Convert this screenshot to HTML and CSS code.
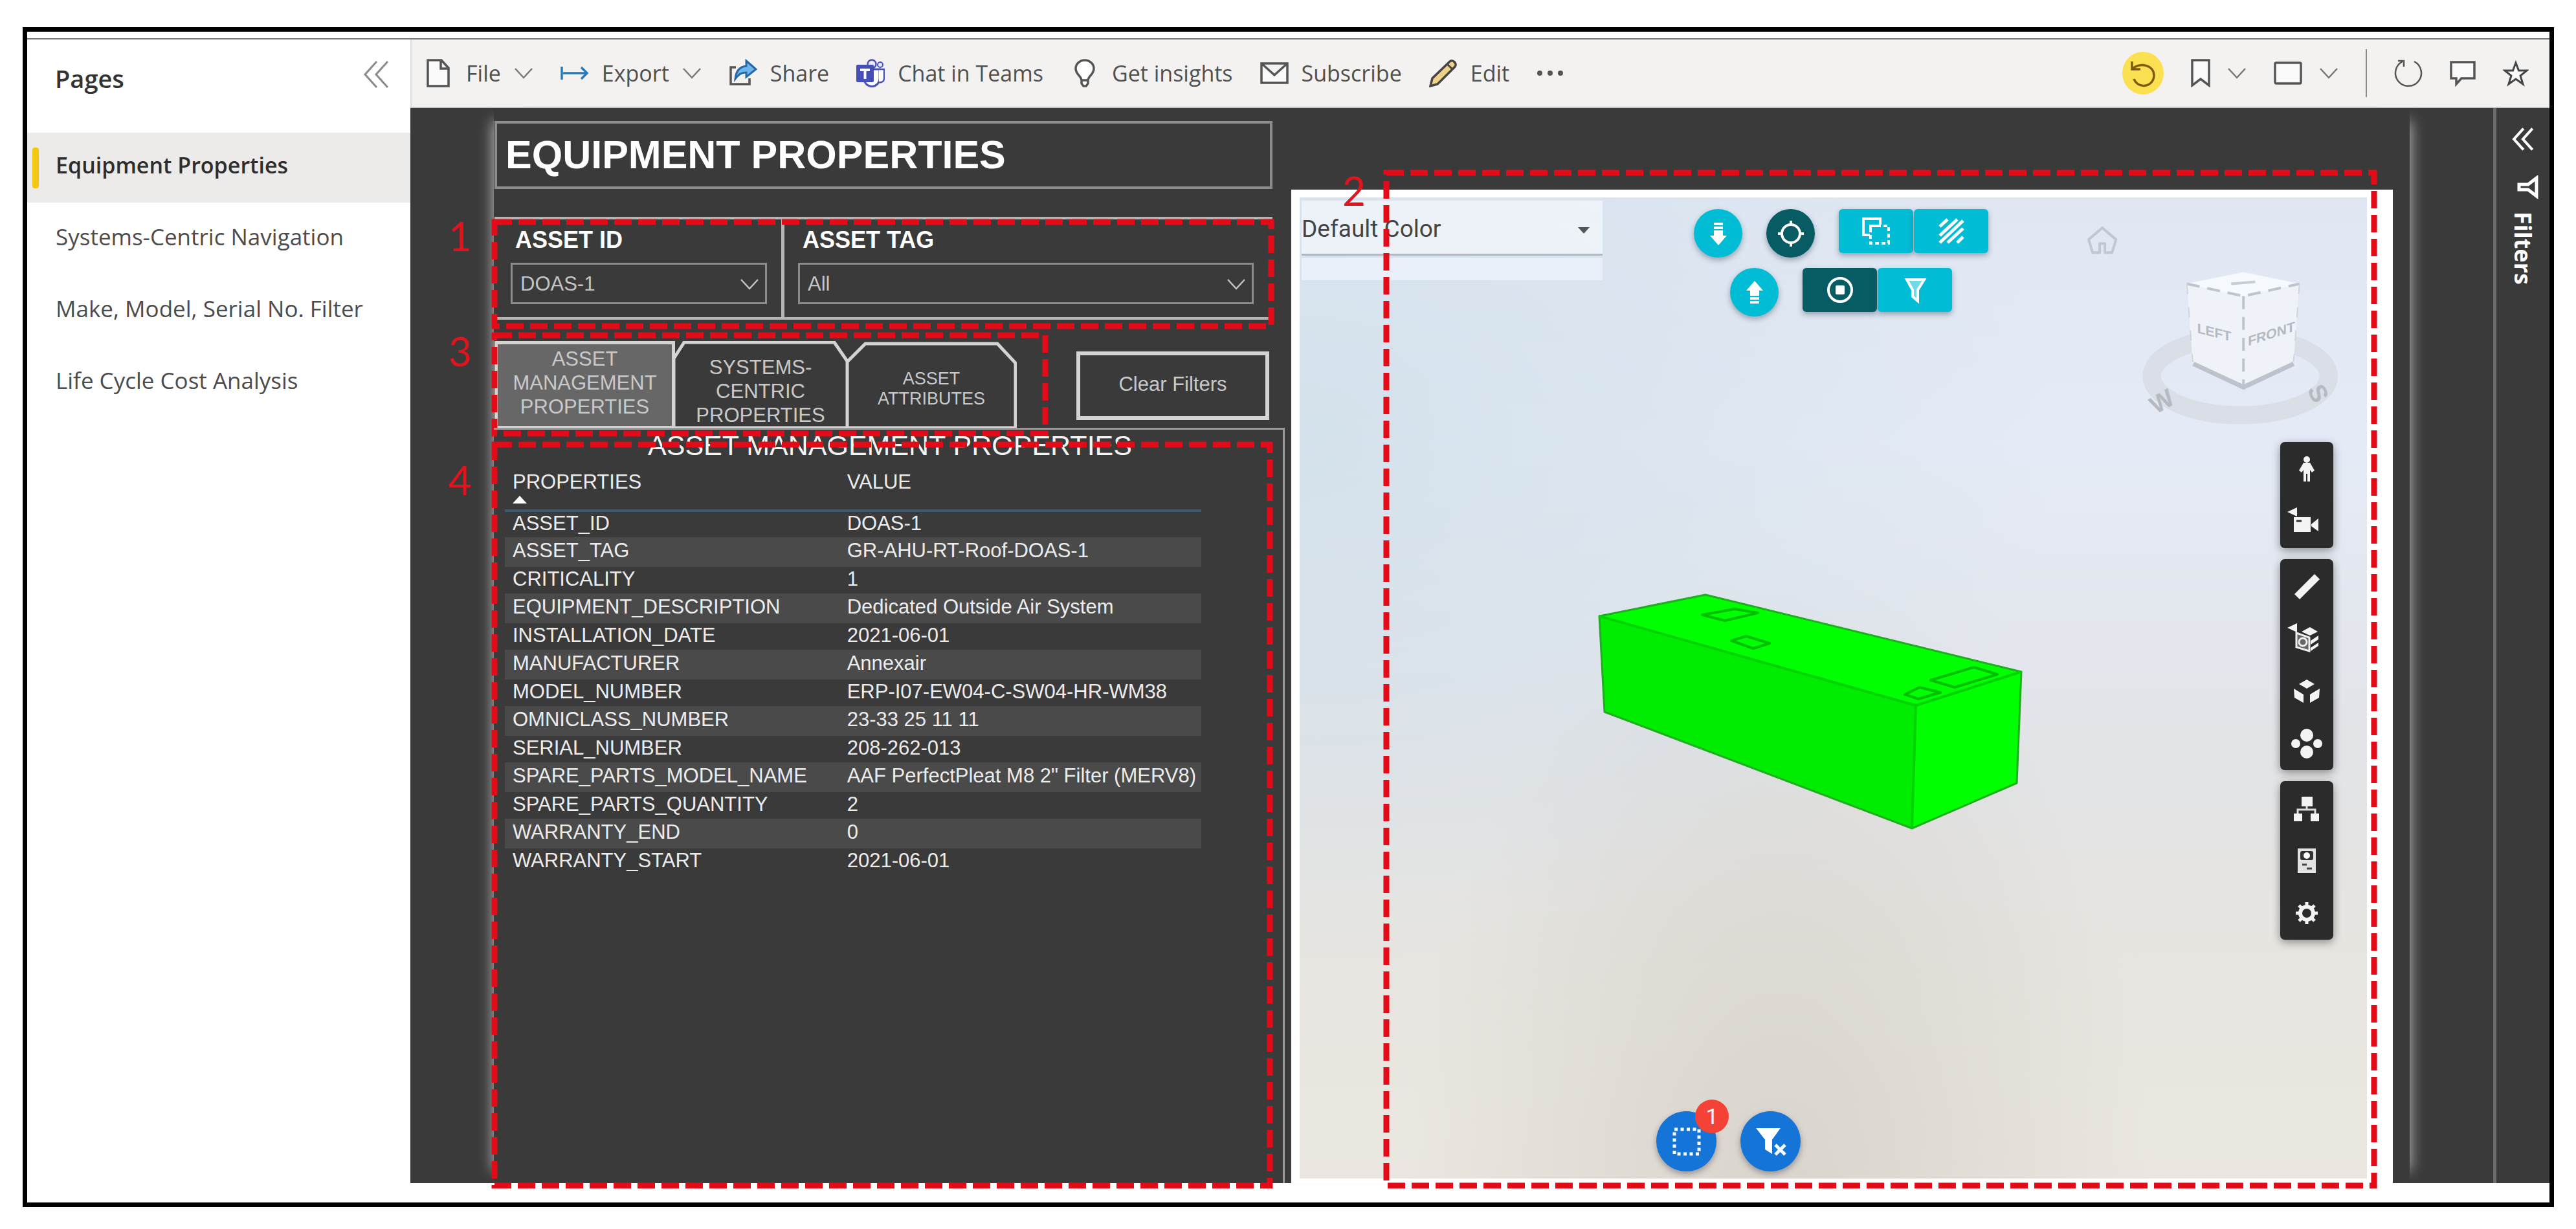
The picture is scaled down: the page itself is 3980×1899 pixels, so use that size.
FILE: index.html
```html
<!DOCTYPE html>
<html lang="en">
<head>
<meta charset="utf-8">
<title>Equipment Properties</title>
<link rel="stylesheet" href="styles.css">
</head>
<body>
<svg width="0" height="0" class="defs" aria-hidden="true">
  <symbol id="chevron" viewBox="0 0 30 20"><path d="M2 3 15 17 28 3" fill="none" stroke="currentColor" stroke-width="2.5"/></symbol>
  <symbol id="collapse" viewBox="0 0 40 44"><path d="M21 2 3 22 21 42M38 2 20 22 38 42" fill="none" stroke="currentColor"/></symbol>
</svg>
<div class="frame">
  <div class="app">
    <nav class="pages" aria-label="Pages">
      <header class="pages-head">
        <h2>Pages</h2>
        <button class="plain" aria-label="Collapse pages"><svg width="42" height="44" stroke-width="3"><use href="#collapse"/></svg></button>
      </header>
      <a class="page active" href="#equipment">Equipment Properties</a>
      <a class="page" href="#systems">Systems-Centric Navigation</a>
      <a class="page" href="#make">Make, Model, Serial No. Filter</a>
      <a class="page" href="#cost">Life Cycle Cost Analysis</a>
    </nav>
    <div class="main">
      <div class="toolbar">
        <button class="tool"><svg width="44" height="44" viewBox="0 0 44 44"><path d="M5 2h21l11 12v28H5zM25 2v13h12" fill="#fafafa" stroke="#555" stroke-width="3.500"/></svg>File<svg class="chev" width="30" height="20"><use href="#chevron"/></svg></button>
        <button class="tool"><svg width="44" height="44" viewBox="0 0 44 44"><path d="M2 12v20M4 22h37M32 13l9 9-9 9" fill="none" stroke="#2b7ab8" stroke-width="3.500"/></svg>Export<svg class="chev" width="30" height="20"><use href="#chevron"/></svg></button>
        <button class="tool"><svg width="44" height="44" viewBox="0 0 44 44"><path d="M11 13H3v26h29v-9" fill="none" stroke="#555" stroke-width="3.500"/><path d="M27 3 42 16 27 28v-7c-8 0-12 3-17 10 1-12 7-19 17-20z" fill="#6cb4ee" stroke="#2468a6" stroke-width="3"/></svg>Share</button>
        <button class="tool"><svg width="44" height="44" viewBox="0 0 44 44"><circle cx="24" cy="8" r="6.500" fill="#e9e9fb" stroke="#4b53bc" stroke-width="2.500"/><circle cx="37" cy="9" r="4" fill="#e9e9fb" stroke="#4b53bc" stroke-width="2"/><path d="M12 16h24v14a12 12 0 0 1-24 1z" fill="#fff" stroke="#4b53bc" stroke-width="3"/><path d="M35 16h8v14c0 5-4 7-8 6" fill="#fff" stroke="#4b53bc" stroke-width="2.500"/><rect y="9" width="27" height="27" rx="2" fill="#464eb8"/><path d="M6 17h15M13.500 17v14" stroke="#fff" stroke-width="4"/></svg>Chat in Teams</button>
        <button class="tool"><svg width="44" height="44" viewBox="0 0 44 44"><path d="M17 33c0-6-9-9-9-18a14 13 0 0 1 28 0c0 9-9 12-9 18zM17 33v5l3 4h4l3-4v-5" fill="#fff" stroke="#555" stroke-width="3.500"/></svg>Get insights</button>
        <button class="tool"><svg width="44" height="44" viewBox="0 0 44 44"><path d="M2 7h40v30H2zM2 7l20 18L42 7" fill="#fafafa" stroke="#555" stroke-width="3.500"/></svg>Subscribe</button>
        <button class="tool"><svg width="44" height="44" viewBox="0 0 44 44"><path d="M2 42 5 30 32 4c4-4 12 3 8 8L13 39z" fill="#f0d188" stroke="#444" stroke-width="3.500"/><path d="M28 8l8 8" stroke="#444" stroke-width="3"/></svg>Edit</button>
        <button class="plain" aria-label="More"><svg width="44" height="12"><g fill="#555"><circle cx="5" cy="6" r="4"/><circle cx="21" cy="6" r="4"/><circle cx="37" cy="6" r="4"/></g></svg></button>
        <div class="tools-end">
          <button class="plain reset" aria-label="Reset"><svg width="42" height="44" viewBox="0 0 42 44"><path d="M4 4v12h13M5 15C16 5 38 9 38 26a16 16 0 0 1-31 5" fill="none" stroke="#7d5c10" stroke-width="3.500"/></svg></button>
          <button class="plain pair" aria-label="Bookmarks"><svg width="30" height="44"><path d="M2 2h26v39L15 31 2 41z" fill="#fafafa" stroke="#555" stroke-width="3.500"/></svg><svg class="chev" width="30" height="20"><use href="#chevron"/></svg></button>
          <button class="plain pair" aria-label="View"><svg width="44" height="44"><rect x="2" y="6" width="40" height="32" rx="2" fill="#fafafa" stroke="#555" stroke-width="3.500"/></svg><svg class="chev" width="30" height="20"><use href="#chevron"/></svg></button>
          <span class="rule"></span>
          <button class="plain" aria-label="Refresh"><svg width="44" height="44"><path d="M31 4a20 20 0 1 1-18 0M6 3h9v9" fill="none" stroke="#555" stroke-width="2.500"/></svg></button>
          <button class="plain" aria-label="Comment"><svg width="40" height="44"><path d="M2 5h36v25H18l-8 9v-9H2z" fill="#fafafa" stroke="#555" stroke-width="3.500"/></svg></button>
          <button class="plain" aria-label="Favorite"><svg width="40" height="44"><path d="M20 6l4.500 12H37L27 26l4 13-11-8-11 8 4-13L3 18h12.500z" fill="#fafafa" stroke="#444" stroke-width="3"/></svg></button>
        </div>
      </div>

      <div class="report">
        <main class="canvas">
          <section class="details">
            <h1>EQUIPMENT PROPERTIES</h1>
            <div class="slicers">
              <div class="slicer">
                <label for="asset-id">ASSET ID</label>
                <div class="pick"><select id="asset-id"><option>DOAS-1</option></select><svg width="30" height="20"><use href="#chevron"/></svg></div>
              </div>
              <div class="slicer wide">
                <label for="asset-tag">ASSET TAG</label>
                <div class="pick"><select id="asset-tag"><option>All</option></select><svg width="30" height="20"><use href="#chevron"/></svg></div>
              </div>
              <div class="callout one"><svg><rect width="100%" height="100%"/></svg><b>1</b></div>
            </div>
            <div class="tabs">
              <button class="tab selected">ASSET MANAGEMENT PROPERTIES</button>
              <button class="tab cut low"><svg viewBox="0 0 272 136" preserveAspectRatio="none"><path d="M2 134V27L18 2h232l20 29v103z"/></svg><span>SYSTEMS-<br>CENTRIC<br>PROPERTIES</span></button>
              <button class="tab cut small"><svg viewBox="0 0 264 136" preserveAspectRatio="none"><path d="M2 134V32L30 4h204l28 30v100z"/></svg><span>ASSET<br>ATTRIBUTES</span></button>
              <button class="clear">Clear Filters</button>
              <div class="callout three"><svg><rect width="100%" height="100%"/></svg><b>3</b></div>
            </div>
            <div class="panel">
              <h3>ASSET MANAGEMENT PROPERTIES</h3>
              <table>
                <thead><tr><th scope="col">PROPERTIES<svg class="sort" width="22" height="12"><path d="M0 12 11 0 22 12z" fill="#fff"/></svg></th><th scope="col">VALUE</th></tr></thead>
                <tbody>
                  <tr><td>ASSET_ID</td><td>DOAS-1</td></tr>
                  <tr><td>ASSET_TAG</td><td>GR-AHU-RT-Roof-DOAS-1</td></tr>
                  <tr><td>CRITICALITY</td><td>1</td></tr>
                  <tr><td>EQUIPMENT_DESCRIPTION</td><td>Dedicated Outside Air System</td></tr>
                  <tr><td>INSTALLATION_DATE</td><td>2021-06-01</td></tr>
                  <tr><td>MANUFACTURER</td><td>Annexair</td></tr>
                  <tr><td>MODEL_NUMBER</td><td>ERP-I07-EW04-C-SW04-HR-WM38</td></tr>
                  <tr><td>OMNICLASS_NUMBER</td><td>23-33 25 11 11</td></tr>
                  <tr><td>SERIAL_NUMBER</td><td>208-262-013</td></tr>
                  <tr><td>SPARE_PARTS_MODEL_NAME</td><td>AAF PerfectPleat M8 2" Filter (MERV8)</td></tr>
                  <tr><td>SPARE_PARTS_QUANTITY</td><td>2</td></tr>
                  <tr><td>WARRANTY_END</td><td>0</td></tr>
                  <tr><td>WARRANTY_START</td><td>2021-06-01</td></tr>
                </tbody>
              </table>
              <div class="callout four"><svg><rect width="100%" height="100%"/></svg><b>4</b></div>
            </div>
          </section>

          <section class="viewer" aria-label="Model viewer">
            <div class="scene">
              <svg class="model" viewBox="2008 305 1649 1516" role="img" aria-label="Selected equipment">
                <g stroke-linejoin="round">
                  <path d="M2471 952 2960 1090 2954 1280 2479 1100z" fill="#00ec00"/>
                  <path d="M2960 1090 3123 1038 3116 1210 2954 1280z" fill="#00ff00"/>
                  <path d="M2471 952 2635 919 3123 1038 2960 1090z" fill="#00ff00"/>
                  <path d="M2471 952 2635 919 3123 1038 3116 1210 2954 1280 2479 1100z" fill="none" stroke="#1fae1f" stroke-width="3"/>
                  <path d="M2471 952 2960 1090 3123 1038M2960 1090 2954 1280" fill="none" stroke="#00d400" stroke-width="4"/>
                  <path d="M2630 950 2680 941 2716 947 2665 959zM2675 990 2698 983 2734 994 2709 1002zM2983 1051 3050 1031 3086 1042 3020 1062zM2943 1073 2966 1062 2998 1070 2964 1080z" fill="none" stroke="#00c000" stroke-width="4"/>
                </g>
              </svg>

              <div class="theme">
                <select aria-label="Color theme"><option>Default Color</option></select>
                <svg width="18" height="12"><path d="M0 1h18L9 11z" fill="#555"/></svg>
              </div>

              <div class="actions">
                <div class="row">
                  <button class="round" aria-label="Move down"><svg width="44" height="44"><path d="M15 5h14v4H15zM15 11h14v4H15zM15 17h14v8h6L22 40 9 25h6z" fill="#fff"/></svg></button>
                  <button class="round dark" aria-label="Focus"><svg width="44" height="44"><g fill="none" stroke="#fff" stroke-width="4"><circle cx="22" cy="22" r="14"/><path d="M22 2v7M22 35v7M2 22h7M35 22h7"/></g></svg></button>
                  <div class="group">
                    <button aria-label="Isolate"><svg width="48" height="44"><g fill="none" stroke="#fff" stroke-width="4"><path d="M14 28H4V3h26v9"/><rect x="15" y="14" width="28" height="27" stroke-dasharray="6 4"/><path d="M15 24V14h12"/></g></svg></button>
                    <button aria-label="Hatch"><svg width="44" height="44"><path d="M4 15 16 4M4 29 31 4M4 40 40 6M16 40 40 18M31 40 40 31" stroke="#fff" stroke-width="5"/></svg></button>
                  </div>
                </div>
                <div class="row">
                  <button class="round" aria-label="Move up"><svg width="44" height="44"><path d="M15 39h14v-4H15zM15 33h14v-4H15zM15 27h14v-8h6L22 4 9 19h6z" fill="#fff"/></svg></button>
                  <div class="group">
                    <button class="dark" aria-label="Selection"><svg width="44" height="44"><circle cx="22" cy="22" r="18" fill="none" stroke="#fff" stroke-width="4"/><rect x="15" y="15" width="14" height="14" rx="2" fill="#fff"/></svg></button>
                    <button aria-label="Filter"><svg width="44" height="44"><path d="M9 6h27L26 22v17l-8-7V22z" fill="#6fdbe8" stroke="#fff" stroke-width="4"/></svg></button>
                  </div>
                </div>
              </div>

              <svg class="cube" width="320" height="320" viewBox="3220 345 390 320" preserveAspectRatio="xMinYMin slice" role="img" aria-label="View cube">
                <path d="M3227 370 3248 352 3269 370 3263 390h-11v-14h-8v14h-11z" fill="none" stroke="#c2c8cf" stroke-width="4" stroke-linejoin="round"/>
                <ellipse cx="3460" cy="580" rx="136" ry="60" fill="none" stroke="#dadee6" stroke-width="28"/>
                <path d="M3378 438 3465 420 3551 438 3542 558 3465 593 3387 558z" fill="#eff3f9"/>
                <path d="M3378 438 3465 420 3551 438 3465 457z" fill="#f6f9fd"/>
                <path d="M3378 438 3465 457 3551 438M3465 457V593" fill="none" stroke="#c0c5cd" stroke-width="4" stroke-dasharray="20 12"/>
                <path d="M3378 438 3387 558M3551 438 3542 558" stroke="#d0d5dd" stroke-width="2" stroke-dasharray="16 20"/>
                <path d="M3388 561 3465 597 3542 561" fill="none" stroke="#bcc3cd" stroke-width="7"/>
                <path d="M3446 438l37-3" stroke="#c8cdd5" stroke-width="4"/>
                <g fill="#b4b9c2" font-family="Liberation Sans, sans-serif" font-weight="700" text-anchor="middle">
                  <text transform="translate(3420 520) skewY(14)" font-size="21">LEFT</text>
                  <text transform="translate(3508 522) skewY(-18)" font-size="21">FRONT</text>
                  <text transform="translate(3346 630) rotate(-30)" font-size="38">W</text>
                  <text transform="translate(3568 612) rotate(65)" font-size="38">S</text>
                </g>
              </svg>

              <div class="rails">
                <div class="rail">
                  <button aria-label="First person"><svg width="44" height="44" viewBox="0 0 44 44"><circle cx="22" cy="7" r="5" fill="#f4f4f4"/><path d="M17 12h10l7 12-4 3-3-4v18h-4V29h-2v12h-4V23l-3 4-4-3z" fill="#f4f4f4"/></svg></button>
                  <button aria-label="Camera"><svg width="60" height="44" viewBox="0 0 60 44"><path d="M0 7 15 0v14zM10 15h26v23H10zM37 26l11-9v20l-11-8z" fill="#f4f4f4"/><path d="M14 21h8" stroke="#333" stroke-width="3"/></svg></button>
                </div>
                <div class="rail">
                  <button aria-label="Measure"><svg width="44" height="44" viewBox="0 0 44 44"><path d="M3 34 34 3l8 8L11 42z" fill="#f4f4f4"/></svg></button>
                  <button aria-label="Section"><svg width="60" height="48" viewBox="0 0 60 48"><path d="M0 7 15 0v14zM22 13l13-7 12 7-12 6zM36 27l12-8v6l-12 8zM36 38l12-8v5l-12 8z" fill="#f4f4f4"/><path d="M14 15l20 7v21l-20-6z" fill="#666" stroke="#eee" stroke-width="3"/><circle cx="24" cy="29" r="6" fill="none" stroke="#eee" stroke-width="3"/></svg></button>
                  <button aria-label="Explode"><svg width="44" height="44" viewBox="0 0 44 44"><path d="M10 11 22 4l12 7-12 7zM2 18l15 9v13L3 32zM42 18l-15 9v13l14-8z" fill="#f4f4f4"/></svg></button>
                  <button aria-label="Groups"><svg width="48" height="48" viewBox="0 0 48 48"><g fill="#f4f4f4"><circle cx="24" cy="11" r="10"/><circle cx="24" cy="37" r="10"/><circle cx="7" cy="24" r="7"/><circle cx="41" cy="24" r="7"/></g></svg></button>
                </div>
                <div class="rail">
                  <button aria-label="Model tree"><svg width="44" height="44" viewBox="0 0 44 44"><path d="M14 4h17v15H14zM2 30h13v12H2zM28 30h13v12H28z" fill="#f4f4f4"/><path d="M8 30v-6h27v6M22 18v6" fill="none" stroke="#ddd" stroke-width="3"/></svg></button>
                  <button aria-label="Properties"><svg width="44" height="44" viewBox="0 0 44 44"><rect x="8" y="3" width="28" height="38" fill="#e2e2e2"/><rect x="12" y="7" width="20" height="14" rx="3" fill="#333"/><circle cx="22" cy="14" r="5" fill="#fff"/><path d="M15 28h7M22 34h8" stroke="#444" stroke-width="3"/></svg></button>
                  <button aria-label="Settings"><svg width="44" height="44" viewBox="0 0 44 44"><circle cx="22" cy="22" r="10" fill="none" stroke="#f4f4f4" stroke-width="6"/><path d="M22 5v6M22 33v6M5 22h6M33 22h6M10 10l5 5M34 10l-5 5M10 34l5-5M34 34l-5-5" stroke="#f4f4f4" stroke-width="5"/></svg></button>
                </div>
              </div>

              <div class="selection">
                <button aria-label="Selected items"><svg width="44" height="44"><rect x="3" y="3" width="38" height="38" fill="none" stroke="#fff" stroke-width="5" stroke-dasharray="5 4.500"/></svg><span class="badge">1</span></button>
                <button aria-label="Remove filter"><svg width="52" height="48"><path d="M3 3h38L28 21v22l-11-7V21z" fill="#fff"/><path d="M33 29l15 15M48 29 33 44" stroke="#fff" stroke-width="5"/></svg></button>
              </div>
            </div>
            <div class="callout two"><svg><rect width="100%" height="100%"/></svg><b>2</b></div>
          </section>
        </main>
        <aside class="filters">
          <button class="plain" aria-label="Expand filters"><svg width="36" height="36" stroke-width="5"><use href="#collapse"/></svg></button>
          <svg width="34" height="36"><path d="M31 4v28L18 22H4v-8h14z" fill="none" stroke="#fff" stroke-width="5"/></svg>
          <span>Filters</span>
        </aside>
      </div>
    </div>
  </div>
</div>
</body>
</html>
```
FILE: styles.css
```css
* { box-sizing: border-box; }

body {
  margin: 0;
  background: #fff;
  color: #444;
  font-family: "Open Sans", "Noto Sans", sans-serif;
  font-size: 34px;
}

h1, h2, h3 { margin: 0; }

button, select { font: inherit; color: inherit; }

button { margin: 0; padding: 0; border: 0; background: none; cursor: pointer; }

svg { display: block; flex: none; }

.defs { position: absolute; }

.frame {
  display: flex;
  min-height: calc(100vh - 76px);
  margin: 42px 34px 34px 35px;
  padding: 10px 0 30px;
  border: 7px solid #000;
}

.app {
  display: flex;
  flex: 1;
  border-top: 2px solid #777;
}

/* Page list */
.pages {
  display: flex;
  flex-direction: column;
  gap: 3px;
  width: 592px;
}

.pages-head {
  display: flex;
  align-items: center;
  justify-content: space-between;
  height: 141px;
  padding: 0 32px 34px 43px;
  color: #8a8a8a;
}

.pages-head h2 { padding-top: 12px; color: #333; font-size: 38px; font-weight: 600; }

.page {
  position: relative;
  height: 108px;
  padding: 23px 0 0 44px;
  color: #4c4c4c;
  font-size: 35px;
  line-height: 54px;
  text-decoration: none;
  white-space: nowrap;
}

.page.active { background: #ecebea; color: #2e2e2e; font-weight: 600; font-size: 34px; }

.page.active::before {
  content: "";
  position: absolute;
  top: 23px;
  left: 8px;
  width: 10px;
  height: 63px;
  border-radius: 4px;
  background: #f2c811;
}

/* Command bar */
.main { display: flex; flex: 1; flex-direction: column; min-width: 0; }

.toolbar {
  display: flex;
  align-items: center;
  gap: 42px;
  height: 106px;
  padding: 0 32px 0 20px;
  border-bottom: 2px solid #c8c8c8;
  border-left: 2px solid #ddd;
  background: #f3f2f1;
  color: #505050;
}

.tool { display: flex; align-items: center; gap: 20px; white-space: nowrap; }

.chev { color: #777; }

.tools-end { display: flex; align-items: center; gap: 42px; margin-left: auto; }

.pair { display: flex; align-items: center; gap: 26px; }

.reset {
  display: grid;
  place-items: center;
  width: 64px;
  height: 66px;
  border-radius: 50%;
  background: #fbe052;
}

.rule { width: 2px; height: 74px; background: #8a8a8a; }

/* Report */
.report {
  display: flex;
  flex: 1;
  padding-left: 129px;
  background: #3a3a3a;
}

.canvas {
  display: grid;
  grid-template-columns: 1222fr 1702fr;
  gap: 10px;
  flex: 1;
  margin-right: 129px;
  padding-right: 26px;
  box-shadow: 22px 0 20px -20px #b0b0b0, -22px 0 20px -20px #b0b0b0;
  background: #3a3a3a;
  font-family: "Liberation Sans", Arial, sans-serif;
  font-size: 31px;
}

.details { display: flex; flex-direction: column; padding-top: 20px; }

h1 {
  margin: 0 19px 43px 1px;
  padding: 0 13px;
  border: 4px solid #8c8c8c;
  color: #fff;
  font-size: 61px;
  line-height: 97px;
}

.slicers {
  position: relative;
  display: grid;
  grid-template-columns: 443fr 759fr;
  margin: 0 19px 33px 1px;
  border: solid #b5b5b5;
  border-width: 4px 0;
}

.slicer { height: 151px; padding: 12px 22px 0 25px; }

.slicer.wide { padding: 12px 29px 0 21px; border-left: 5px solid #b5b5b5; }

.slicer label { display: block; margin-left: 7px; color: #fff; font-size: 36px; font-weight: 700; line-height: 40px; }

.pick { position: relative; margin-top: 15px; }

.pick select {
  appearance: none;
  display: block;
  width: 100%;
  height: 64px;
  padding: 0 12px;
  border: 3px solid #8c8c8c;
  border-radius: 0;
  background: none;
  color: #c4c4c4;
}

.pick svg { position: absolute; top: 23px; right: 12px; color: #c4c4c4; pointer-events: none; }

.tabs { position: relative; display: flex; height: 134px; margin: 0 24px 0 1px; }

.tab {
  position: relative;
  width: 279px;
  height: 136px;
  color: #c9c9c9;
  line-height: 37px;
}

.tab.selected { padding-bottom: 7px; border: 5px solid #d5d2d2; background: #676767; }

.tab.cut { width: 272px; margin-left: -4px; }

.tab.cut svg { position: absolute; inset: 0; width: 100%; height: 100%; }

.tab.cut path { fill: #3a3a3a; stroke: #d5d2d2; stroke-width: 5; }

.tab.cut span { position: relative; }

.tab.low { padding-top: 18px; }

.tab.small { width: 264px; padding-top: 12px; font-size: 27px; line-height: 31px; }

.clear {
  width: 298px;
  height: 106px;
  margin: 16px 0 0 auto;
  padding-bottom: 4px;
  border: 6px solid #d5d2d2;
  color: #c9c9c9;
}

.panel {
  position: relative;
  flex: 1;
  padding: 0 126px 0 17px;
  border: solid #9a9a9a;
  border-width: 3px 3px 0 0;
}

.panel h3 {
  margin: 0 -114px 16px 0;
  color: #f4f4f4;
  font-size: 43px;
  font-weight: 400;
  line-height: 48px;
  text-align: center;
}

table { width: 100%; border-collapse: collapse; color: #ececec; white-space: nowrap; }

th {
  height: 61px;
  padding: 0 10px 0 12px;
  border-bottom: 4px solid #3f5872;
  font-weight: 400;
  line-height: 34px;
  text-align: left;
  vertical-align: top;
}

th:first-child { width: 518px; }

.sort { margin-top: 4px; }

td { height: 41px; padding: 0 8px 4px 12px; line-height: 34px; }

tbody tr:nth-child(even) { background: #4a4a4a; }

tbody tr:nth-child(even) td { height: 46px; }

/* 3D viewer */
.viewer {
  position: relative;
  display: flex;
  margin-top: 126px;
  padding: 12px 40px 7px 13px;
  background: #fff;
}

.scene {
  position: relative;
  flex: 1;
  background:
    radial-gradient(ellipse at 0% 25%, rgba(205, 222, 232, .7), transparent 50%),
    radial-gradient(ellipse at 45% 105%, rgba(208, 203, 195, .7), transparent 45%),
    linear-gradient(#e0e7f3, #e5ebf6 25%, #e2e4e8 55%, #e7e5e1 75%, #ebe7e0);
}

.model { position: absolute; inset: 0; width: 100%; height: 100%; }

.theme {
  position: absolute;
  top: 5px;
  left: 3px;
  width: 465px;
  height: 123px;
  background: linear-gradient(rgba(244, 247, 253, .75) 82px, #b4b8be 82px, #b4b8be 85px, transparent 85px, transparent 89px, rgba(238, 243, 252, .8) 89px);
}

.theme select {
  appearance: none;
  width: 100%;
  height: 86px;
  padding: 0;
  border: 0;
  background: none;
  color: #444;
  font-family: Roboto, sans-serif;
  font-size: 37px;
}

.theme svg { position: absolute; top: 40px; right: 20px; pointer-events: none; }

.actions {
  position: absolute;
  top: 18px;
  right: 0;
  left: 24px;
  display: flex;
  flex-direction: column;
  align-items: center;
  gap: 16px;
  pointer-events: none;
}

.row { display: flex; gap: 37px; }

.row button { display: grid; place-items: center; background: #00bcd4; box-shadow: 0 4px 8px rgba(60, 80, 100, .45); }

.round { width: 75px; height: 75px; border-radius: 50%; }

.row .dark { background: #065c62; }

.group { display: flex; gap: 1px; }

.group button { width: 115px; height: 68px; border-radius: 6px; }

.cube { position: absolute; top: 40px; right: 45px; width: 392px; overflow: visible; }

.rails { position: absolute; top: 378px; right: 52px; display: grid; gap: 17px; }

.rail {
  width: 82px;
  padding: 1px 0;
  border-radius: 7px;
  background: #2b2b2b;
  box-shadow: 0 4px 14px rgba(0, 0, 0, .4);
}

.rail button { display: grid; place-items: center; width: 100%; height: 81px; }

.selection {
  position: absolute;
  right: 0;
  bottom: 11px;
  left: 0;
  display: flex;
  justify-content: center;
  gap: 37px;
  padding-right: 324px;
}

.selection button {
  position: relative;
  display: grid;
  place-items: center;
  width: 93px;
  height: 93px;
  border-radius: 50%;
  background: #1474d8;
  box-shadow: 0 4px 10px rgba(60, 60, 80, .45);
}

.badge {
  position: absolute;
  top: -18px;
  right: -19px;
  width: 52px;
  border-radius: 50%;
  background: #f44336;
  color: #fff;
  font: 34px/52px Roboto, sans-serif;
}

/* Filters pane */
.filters {
  display: flex;
  flex-direction: column;
  align-items: center;
  width: 87px;
  padding-top: 30px;
  border-left: 5px solid #6c6c6c;
  color: #fff;
}

.filters > svg { margin: 38px 0 20px 14px; }

.filters span { font-size: 36px; font-weight: 700; line-height: 40px; writing-mode: vertical-rl; }

/* Numbered callouts drawn over the report */
.callout { position: absolute; pointer-events: none; }

.callout svg { width: 100%; height: 100%; overflow: visible; }

.callout rect { fill: none; stroke: #e30b17; stroke-width: 9; stroke-dasharray: 27 10; }

.callout b {
  position: absolute;
  left: -71px;
  color: #e0141c;
  font: 400 62px/62px Lato, sans-serif;
}

.one { inset: 4px 2px -14px 0; }
.one b { top: -10px; }
.two { inset: -26px 29px -4px 147px; }
.two b { top: -4px; left: -68px; }
.three { inset: -9px 346px -9px 0; }
.three b { top: -7px; }
.four { inset: 23px 20px -4px 1px; }
.four b { top: 23px; }
```
